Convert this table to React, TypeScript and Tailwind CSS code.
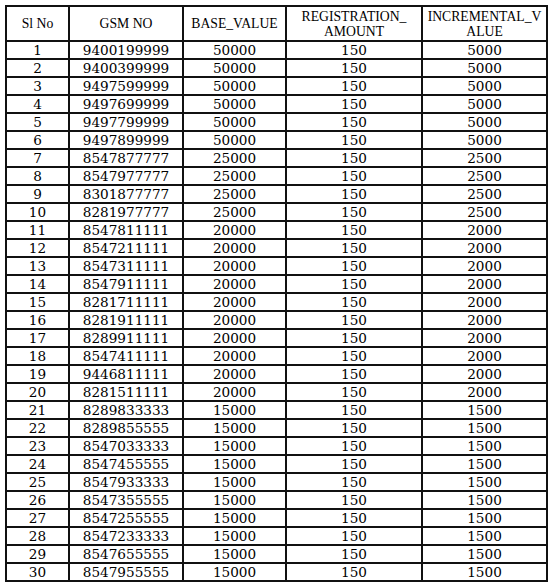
import React from "react";

const rows: [string, string, string, string, string][] = [
  ["1", "9400199999", "50000", "150", "5000"],
  ["2", "9400399999", "50000", "150", "5000"],
  ["3", "9497599999", "50000", "150", "5000"],
  ["4", "9497699999", "50000", "150", "5000"],
  ["5", "9497799999", "50000", "150", "5000"],
  ["6", "9497899999", "50000", "150", "5000"],
  ["7", "8547877777", "25000", "150", "2500"],
  ["8", "8547977777", "25000", "150", "2500"],
  ["9", "8301877777", "25000", "150", "2500"],
  ["10", "8281977777", "25000", "150", "2500"],
  ["11", "8547811111", "20000", "150", "2000"],
  ["12", "8547211111", "20000", "150", "2000"],
  ["13", "8547311111", "20000", "150", "2000"],
  ["14", "8547911111", "20000", "150", "2000"],
  ["15", "8281711111", "20000", "150", "2000"],
  ["16", "8281911111", "20000", "150", "2000"],
  ["17", "8289911111", "20000", "150", "2000"],
  ["18", "8547411111", "20000", "150", "2000"],
  ["19", "9446811111", "20000", "150", "2000"],
  ["20", "8281511111", "20000", "150", "2000"],
  ["21", "8289833333", "15000", "150", "1500"],
  ["22", "8289855555", "15000", "150", "1500"],
  ["23", "8547033333", "15000", "150", "1500"],
  ["24", "8547455555", "15000", "150", "1500"],
  ["25", "8547933333", "15000", "150", "1500"],
  ["26", "8547355555", "15000", "150", "1500"],
  ["27", "8547255555", "15000", "150", "1500"],
  ["28", "8547233333", "15000", "150", "1500"],
  ["29", "8547655555", "15000", "150", "1500"],
  ["30", "8547955555", "15000", "150", "1500"],
];

const th =
  "border-2 border-[#111] px-0 text-center align-middle font-normal text-[13.7px] leading-[15px] text-black [font-family:'Liberation_Serif',serif]";
const td =
  "border-2 border-[#111] p-0 text-center align-middle text-[13.6px] leading-[14px] text-black [font-family:'DejaVu_Serif',serif]";

export default function App() {
  return (
    <div className="w-[550px] h-[585px] bg-white pt-[5px] pl-[5px]">
      <table className="table-fixed border-collapse w-[541px]">
        <colgroup>
          <col className="w-[63px]" />
          <col className="w-[114px]" />
          <col className="w-[103px]" />
          <col className="w-[136px]" />
          <col className="w-[125px]" />
        </colgroup>
        <thead>
          <tr className="h-[35px]">
            <th className={th}>Sl No</th>
            <th className={th}>GSM NO</th>
            <th className={th}>BASE_VALUE</th>
            <th className={th}>
              REGISTRATION_
              <br />
              AMOUNT
            </th>
            <th className={th}>
              INCREMENTAL_V
              <br />
              ALUE
            </th>
          </tr>
        </thead>
        <tbody>
          {rows.map((r) => (
            <tr key={r[0]} className="h-[18px]">
              {r.map((c, i) => (
                <td key={i} className={td}>
                  {c}
                </td>
              ))}
            </tr>
          ))}
        </tbody>
      </table>
    </div>
  );
}
